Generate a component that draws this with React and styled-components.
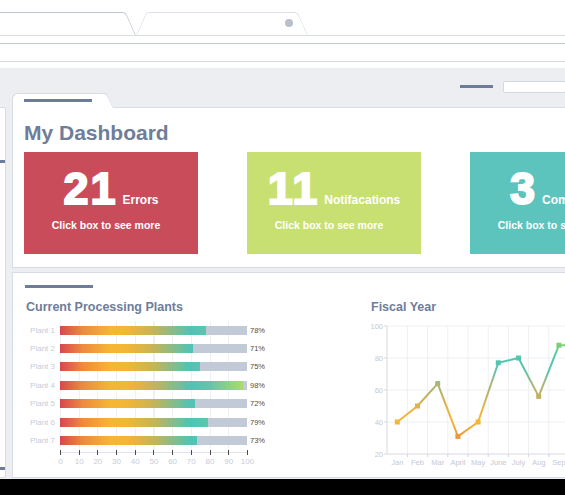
import React from 'react';
import styled, { createGlobalStyle } from 'styled-components';

const plants = [78, 71, 75, 98, 72, 79, 73];
const ticks = [0, 10, 20, 30, 40, 50, 60, 70, 80, 90, 100];
const months = ['Jan', 'Feb', 'Mar', 'April', 'May', 'June', 'July', 'Aug', 'Sep', 'Oct', 'Nov', 'Dec'];
const fiscal = [40, 50, 64, 31, 40, 77, 80, 56, 88, 88, 72, 80];

const cards = [
  { value: '21', label: 'Errors', bg: '#c94c5b' },
  { value: '11', label: 'Notifacations', bg: '#c8df72' },
  { value: '3', label: 'Completed', bg: '#5cc4bd' },
];

// chart helpers (svg local coords)
const yOf = (v) => 136 - (v - 20) * 1.6;
const xOf = (i) => 26.3 + i * 20.2;

const App = () => {
  const points = fiscal.map((v, i) => `${xOf(i)},${yOf(v)}`).join(' ');

  return (
    <Page>
      <GlobalStyle />
      <Chrome>
        <TabStrip>
          <BrowserTab $w={165} $offset={-30} $line="#bfc6d1" />
          <BrowserTab $w={172} $offset={1} $line="#dde1e7">
            <TabDot />
          </BrowserTab>
        </TabStrip>
        <AddressBar />
      </Chrome>

      <Workspace>
        <TopBar>
          <TopDash />
          <SearchBox />
        </TopBar>

        <Body>
          <Sidebar>
            <SideDash />
            <SideDash />
          </Sidebar>

          <MainCol>
            <FolderTab>
              <Dash />
            </FolderTab>

            <DashboardPanel>
              <Title>My Dashboard</Title>
              <CardRow>
                {cards.map((card) => (
                  <Card key={card.label} $bg={card.bg}>
                    <CardTop>
                      <BigNum>{card.value}</BigNum>
                      <CardLabel>{card.label}</CardLabel>
                    </CardTop>
                    <CardHint>Click box to see more</CardHint>
                  </Card>
                ))}
              </CardRow>
            </DashboardPanel>

            <ChartsPanel>
              <Dash $shift={-1} />
              <ChartsGrid>
                <div>
                  <SectionTitle>Current Processing Plants</SectionTitle>
                  <BarChart>
                    {plants.map((pct, i) => (
                      <BarRow key={i}>
                        <PlantLabel>Plant {i + 1}</PlantLabel>
                        <TrackCell>
                          <Track>
                            <Fill style={{ width: `${pct}%` }} />
                          </Track>
                        </TrackCell>
                        <Pct>{pct}%</Pct>
                      </BarRow>
                    ))}
                  </BarChart>
                  <AxisTicks>
                    {ticks.map((t) => (
                      <Tick key={t} />
                    ))}
                  </AxisTicks>
                  <AxisLabels>
                    {ticks.map((t) => (
                      <AxisLabel key={t}>
                        <span>{t}</span>
                      </AxisLabel>
                    ))}
                  </AxisLabels>
                </div>

                <div>
                  <SectionTitle>Fiscal Year</SectionTitle>
                  <LineChart width="280" height="155" viewBox="0 0 280 155">
                    <defs>
                      <linearGradient id="fy" gradientUnits="userSpaceOnUse" x1="0" y1="8" x2="0" y2="136">
                        <stop offset="0.12" stopColor="#8fd06a" />
                        <stop offset="0.25" stopColor="#4fc6b3" />
                        <stop offset="0.35" stopColor="#5dc3aa" />
                        <stop offset="0.45" stopColor="#a8b877" />
                        <stop offset="0.55" stopColor="#c2b062" />
                        <stop offset="0.65" stopColor="#ecb43a" />
                        <stop offset="0.75" stopColor="#f6b632" />
                        <stop offset="0.87" stopColor="#ef953a" />
                      </linearGradient>
                    </defs>
                    {[100, 80, 60, 40].map((v) => (
                      <line key={v} x1="16" x2="280" y1={yOf(v)} y2={yOf(v)} stroke="#edf0f3" />
                    ))}
                    {months.map((m, i) => (
                      <g key={m}>
                        <line x1={xOf(i) + 10.1} x2={xOf(i) + 10.1} y1="8" y2="139" stroke="#edf0f3" />
                        <line x1={xOf(i) + 10.1} x2={xOf(i) + 10.1} y1="136" y2="139" stroke="#d5d9e0" />
                        <text x={xOf(i)} y="147" fontSize="7.5" fill="#c3c9d5" textAnchor="middle">{m}</text>
                      </g>
                    ))}
                    <line x1="16" x2="280" y1="136" y2="136" stroke="#d5d9e0" />
                    <line x1="16" x2="16" y1="8" y2="136" stroke="#d5d9e0" />
                    {[100, 80, 60, 40, 20].map((v) => (
                      <g key={v}>
                        <line x1="13" x2="16" y1={yOf(v)} y2={yOf(v)} stroke="#d5d9e0" />
                        <text x="12" y={yOf(v) + 2.6} fontSize="7.5" fill="#c3c9d5" textAnchor="end">{v}</text>
                      </g>
                    ))}
                    <polyline points={points} fill="none" stroke="url(#fy)" strokeWidth="2" strokeLinejoin="round" />
                    {fiscal.map((v, i) => (
                      <rect key={i} x={xOf(i) - 2.5} y={yOf(v) - 2.5} width="5" height="5" fill="url(#fy)" />
                    ))}
                  </LineChart>
                </div>
              </ChartsGrid>
            </ChartsPanel>
          </MainCol>
        </Body>
      </Workspace>
      <Footer />
    </Page>
  );
};

const GlobalStyle = createGlobalStyle`
  html, body {
    margin: 0;
    overflow: hidden;
    background: #fff;
  }
`;

const Page = styled.div`
  width: 660px;
  height: 495px;
  display: flex;
  flex-direction: column;
  background: #fff;
  font-family: "Liberation Sans", Arial, sans-serif;
`;

const Chrome = styled.header`
  height: 68px;
  flex-shrink: 0;
  background: #fff;
`;

const TabStrip = styled.div`
  display: flex;
  height: 36px;
  box-sizing: border-box;
  padding-top: 12px;
  border-bottom: 1px solid #d9dde4;
`;

const BrowserTab = styled.div`
  position: relative;
  flex-shrink: 0;
  width: ${(p) => p.$w}px;
  height: 23px;
  margin-left: ${(p) => p.$offset}px;

  &::before,
  &::after {
    content: '';
    position: absolute;
    top: 0;
    bottom: 0;
    background: #fff;
    border-top: 1px solid ${(p) => p.$line};
  }

  &::before {
    left: 0;
    right: 50%;
    border-left: 1px solid ${(p) => p.$line};
    border-top-left-radius: 4px;
    transform: skewX(-24deg);
    transform-origin: bottom left;
  }

  &::after {
    left: 50%;
    right: 0;
    border-right: 1px solid ${(p) => p.$line};
    border-top-right-radius: 4px;
    transform: skewX(24deg);
    transform-origin: bottom right;
  }
`;

const TabDot = styled.span`
  position: absolute;
  z-index: 1;
  right: 15px;
  top: 7px;
  width: 8px;
  height: 8px;
  border-radius: 50%;
  background: #b8bfcb;
`;

const AddressBar = styled.div`
  margin-top: 7px;
  height: 19px;
  box-sizing: border-box;
  border-top: 1px solid #c3c9d3;
  border-bottom: 1px solid #d3d8df;
`;

const Workspace = styled.div`
  flex: 1;
  display: flex;
  flex-direction: column;
  background: #eceef2;
`;

const TopBar = styled.div`
  height: 25px;
  flex-shrink: 0;
  box-sizing: border-box;
  padding-top: 12px;
  display: flex;
  align-items: center;
  justify-content: flex-end;
  gap: 10px;
`;

const TopDash = styled.div`
  width: 33px;
  height: 3px;
  background: #6d7c9a;
`;

const SearchBox = styled.div`
  width: 157px;
  height: 12px;
  box-sizing: border-box;
  background: #fff;
  border: 1px solid #d5dae2;
  border-radius: 2px;
`;

const Body = styled.div`
  flex: 1;
  display: flex;
  gap: 6px;
  padding-bottom: 1px;
`;

const Sidebar = styled.aside`
  width: 5px;
  margin-top: 14px;
  background: #fff;
  border: 1px solid #d8dce4;
  border-left: none;
  border-radius: 0 3px 3px 0;
  display: flex;
  flex-direction: column;
  justify-content: space-between;
  padding: 52px 0 7px;
`;

const SideDash = styled.div`
  width: 5px;
  height: 3px;
  background: #6d7c9a;
`;

const MainCol = styled.main`
  flex: 1;
  display: flex;
  flex-direction: column;
`;

const FolderTab = styled.div`
  position: relative;
  z-index: 1;
  width: 94px;
  height: 15px;
  box-sizing: border-box;
  margin-bottom: -1px;
  padding: 5px 0 0 11px;
  background: #fff;
  border: 1px solid #d8dce4;
  border-right: none;
  border-bottom: none;
  border-top-left-radius: 6px;

  &::after {
    content: '';
    position: absolute;
    top: -1px;
    bottom: 0;
    left: calc(100% - 1px);
    width: 8px;
    background: #fff;
    border-top: 1px solid #d8dce4;
    border-right: 1px solid #d8dce4;
    border-top-right-radius: 3px;
    transform: skewX(27deg);
    transform-origin: bottom left;
  }
`;

const Dash = styled.div`
  width: 68px;
  height: 3px;
  margin-left: ${(p) => p.$shift || 0}px;
  background: #6d7c9a;
`;

const DashboardPanel = styled.section`
  height: 161px;
  box-sizing: border-box;
  padding: 13px 0 0 11px;
  background: #fff;
  border: 1px solid #d8dce4;
`;

const Title = styled.h1`
  margin: 0;
  font-size: 21px;
  line-height: 24px;
  font-weight: 700;
  color: #6e7d9b;
`;

const CardRow = styled.div`
  display: flex;
  gap: 49px;
  margin-top: 7px;
`;

const Card = styled.div`
  flex-shrink: 0;
  width: 174px;
  height: 102px;
  box-sizing: border-box;
  padding-top: 14px;
  display: flex;
  flex-direction: column;
  align-items: center;
  background: ${(p) => p.$bg};
  color: #fff;
  cursor: pointer;
`;

const CardTop = styled.div`
  display: flex;
  align-items: baseline;
  gap: 5px;
`;

const BigNum = styled.span`
  font-size: 45px;
  line-height: 45px;
  font-weight: 700;
  letter-spacing: 2px;
  -webkit-text-stroke: 2px #fff;
`;

const CardLabel = styled.span`
  font-size: 12px;
  font-weight: 700;
`;

const CardHint = styled.div`
  margin: 8px 10px 0 0;
  font-size: 10.5px;
  line-height: 12px;
  font-weight: 700;
`;

const ChartsPanel = styled.section`
  margin-top: 4px;
  height: 206px;
  box-sizing: border-box;
  padding: 12px 0 0 13px;
  background: #fff;
  border: 1px solid #d8dce4;
`;

const ChartsGrid = styled.div`
  display: grid;
  grid-template-columns: 345px 1fr;
  margin-top: 12px;
`;

const SectionTitle = styled.h2`
  margin: 0;
  font-size: 12.5px;
  line-height: 15px;
  font-weight: 700;
  color: #6e7d9b;
`;

const BarChart = styled.div`
  margin-top: 6px;
`;

const BarRow = styled.div`
  display: flex;
  align-items: center;
  height: 18.4px;
`;

const PlantLabel = styled.span`
  width: 34px;
  box-sizing: border-box;
  padding-right: 5px;
  text-align: right;
  font-size: 8px;
  color: #c6ccd8;
  white-space: nowrap;
`;

const TrackCell = styled.div`
  width: 187px;
  height: 100%;
  display: flex;
  align-items: center;
  background: repeating-linear-gradient(to right, #edf0f4 0 1px, transparent 1px 18.7px);
`;

const Track = styled.div`
  width: 100%;
  height: 9px;
  display: flex;
  background: #c3cad7;
`;

const Fill = styled.div`
  height: 100%;
  background-image: linear-gradient(
    to right,
    #d8464f 0%,
    #ec8a3e 12%,
    #f6b634 27%,
    #f2b636 36%,
    #c6b457 50%,
    #4fc3b6 70%,
    #62c6ab 80%,
    #b4dc6b 100%
  );
  background-size: 187px 100%;
`;

const Pct = styled.span`
  margin-left: 3px;
  font-size: 7.5px;
  color: #4d4d4d;
`;

const AxisTicks = styled.div`
  width: 188px;
  height: 5px;
  margin-left: 34px;
  display: flex;
  justify-content: space-between;
  background: linear-gradient(#dfe3ea, #dfe3ea) center / 100% 1px no-repeat;
`;

const Tick = styled.div`
  width: 1px;
  height: 100%;
  background: #4a4a4a;
`;

const AxisLabels = styled.div`
  width: 188px;
  margin: 2px 0 0 34px;
  display: flex;
  justify-content: space-between;
`;

const AxisLabel = styled.div`
  width: 1px;
  display: flex;
  justify-content: center;
  font-size: 8px;
  line-height: 10px;
  color: #c6ccd8;
  white-space: nowrap;
`;

const LineChart = styled.svg`
  display: block;
  margin-top: 3px;
  overflow: visible;
  font-family: "Liberation Sans", Arial, sans-serif;
`;

const Footer = styled.footer`
  height: 16px;
  flex-shrink: 0;
  background: #000;
`;

export default App;
